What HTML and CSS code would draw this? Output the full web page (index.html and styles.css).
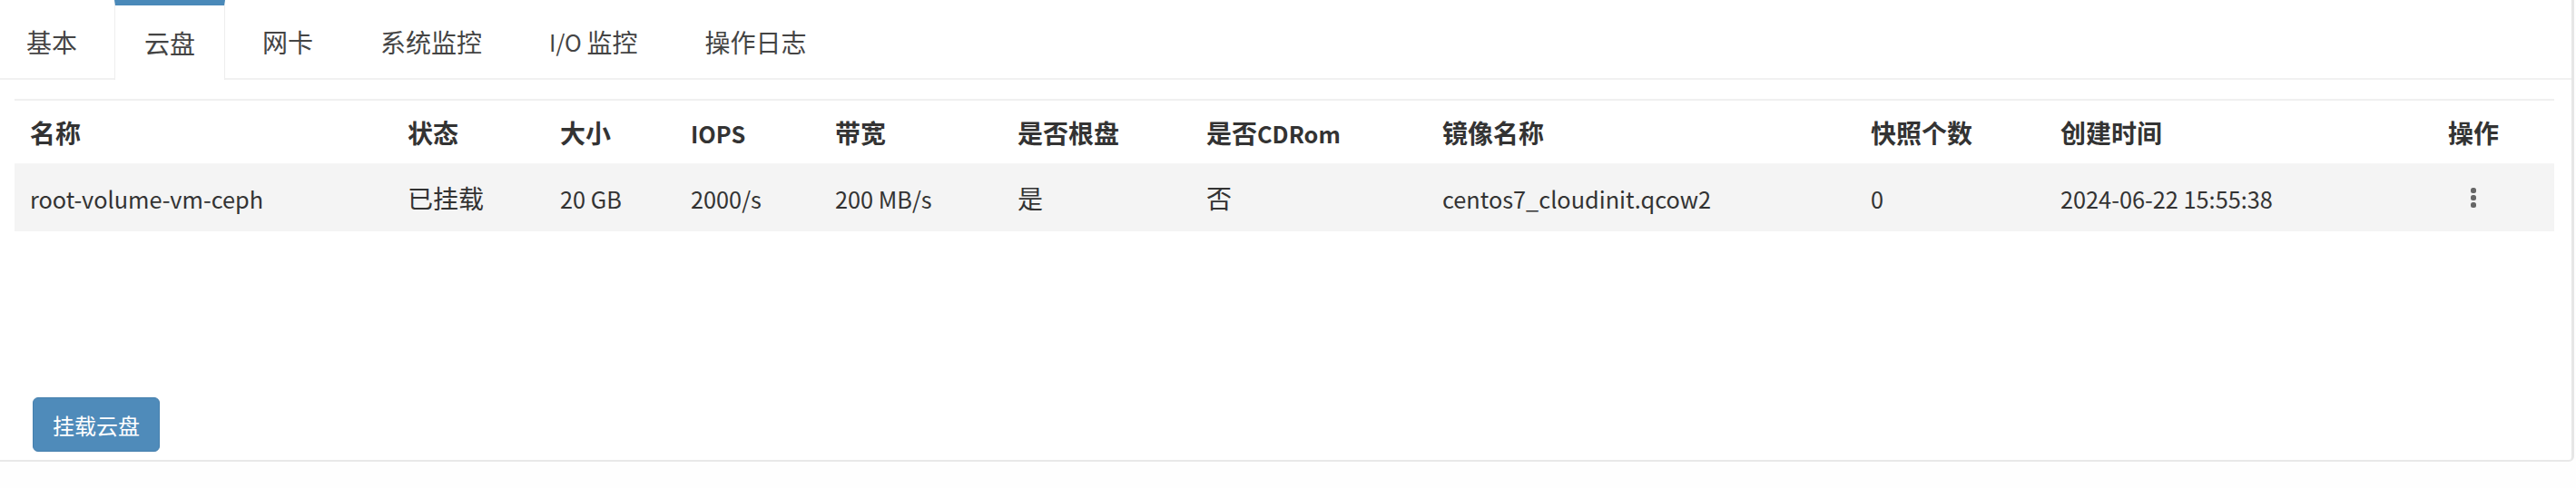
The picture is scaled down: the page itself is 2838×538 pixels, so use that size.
FILE: index.html
```html
<!DOCTYPE html>
<html lang="zh-CN">
<head>
<meta charset="utf-8">
<title>云盘</title>
<link rel="stylesheet" href="styles.css">
</head>
<body>
<div class="panel">
  <ul class="tabs">
    <li class="tab">基本</li>
    <li class="tab active">云盘</li>
    <li class="tab">网卡</li>
    <li class="tab">系统监控</li>
    <li class="tab"><span class="lat">I/O </span>监控</li>
    <li class="tab">操作日志</li>
  </ul>
  <div class="content">
    <div class="table">
      <div class="row head">
        <div class="cell">名称</div>
        <div class="cell">状态</div>
        <div class="cell">大小</div>
        <div class="cell"><span class="lat">IOPS</span></div>
        <div class="cell">带宽</div>
        <div class="cell">是否根盘</div>
        <div class="cell">是否<span class="lat">CDRom</span></div>
        <div class="cell">镜像名称</div>
        <div class="cell">快照个数</div>
        <div class="cell">创建时间</div>
        <div class="cell center">操作</div>
      </div>
      <div class="row body">
        <div class="cell"><span class="lat">root-volume-vm-ceph</span></div>
        <div class="cell">已挂载</div>
        <div class="cell"><span class="lat">20 GB</span></div>
        <div class="cell"><span class="lat">2000/s</span></div>
        <div class="cell"><span class="lat">200 MB/s</span></div>
        <div class="cell">是</div>
        <div class="cell">否</div>
        <div class="cell"><span class="lat">centos7_cloudinit.qcow2</span></div>
        <div class="cell"><span class="lat">0</span></div>
        <div class="cell"><span class="lat">2024-06-22 15:55:38</span></div>
        <div class="cell center">
          <svg class="kebab" width="8" height="24" viewBox="0 0 8 24" aria-hidden="true">
            <rect x="1" y="1" width="6" height="6" rx="2.5" fill="#666"/>
            <rect x="1" y="9" width="6" height="6" rx="2.5" fill="#666"/>
            <rect x="1" y="17" width="6" height="6" rx="2.5" fill="#666"/>
          </svg>
        </div>
      </div>
    </div>
    <div class="footer">
      <button class="btn">挂载云盘</button>
    </div>
  </div>
</div>
</body>
</html>
```

FILE: styles.css
```css
html, body {
  margin: 0;
  padding: 0;
  background: #fefefe;
}

body {
  font-family: "Noto Sans CJK SC", "Noto Sans", sans-serif;
  color: #333;
  width: 2838px;
  height: 538px;
  overflow: hidden;
}

.lat {
  font-size: 25.3px;
}

.panel {
  width: 2833px;
  height: 507px;
  background: #fff;
  border-right: 3px solid #e6e6e6;
  border-bottom: 2px solid #e8e8e8;
  border-bottom-right-radius: 6px;
  box-sizing: content-box;
  display: flex;
  flex-direction: column;
}

.tabs {
  list-style: none;
  margin: 0;
  padding: 0;
  height: 86px;
  display: flex;
  gap: 8px;
  border-bottom: 2px solid #f1f1f1;
}

.tab {
  margin-top: 6px;
  height: 80px;
  padding: 0 32px;
  display: flex;
  align-items: center;
  font-size: 28px;
  color: #444;
  border-left: 1px solid transparent;
  border-right: 1px solid transparent;
  white-space: pre;
}

.tab:first-child {
  margin-left: -4px;
}

.tab.active {
  margin-top: 0;
  height: 82px;
  border-top: 6px solid #4a89b9;
  border-left: 1px solid #eeeeee;
  border-right: 1px solid #eeeeee;
  background: #fff;
  margin-bottom: -2px;
}

.content {
  flex: 1;
  display: flex;
  flex-direction: column;
  padding: 21px 19px 9px 16px;
}

.table {
  border-top: 2px solid #f0f0f0;
}

.row {
  display: grid;
  grid-template-columns: 416px 168px 144px 159px 201px 208px 260px 472px 209px 381px 182px;
  align-items: center;
  font-size: 28px;
}

.row.head {
  height: 69px;
  font-weight: bold;
  color: #333;
  border-bottom: 1px solid #f6f6f6;
}

.row.body {
  height: 74px;
  background: #f4f4f4;
  color: #333;
}

.cell {
  padding-left: 17px;
  white-space: nowrap;
}

.cell.center {
  padding-left: 0;
  text-align: center;
  display: flex;
  justify-content: center;
}

.kebab {
  display: block;
}

.footer {
  margin-top: auto;
  padding-left: 20px;
}

.btn {
  width: 140px;
  height: 60px;
  background: #4f8bba;
  border: 1px solid #4680ae;
  border-radius: 6px;
  color: #fff;
  font-family: "Noto Sans CJK SC", sans-serif;
  font-size: 24px;
  padding: 0;
}
```
